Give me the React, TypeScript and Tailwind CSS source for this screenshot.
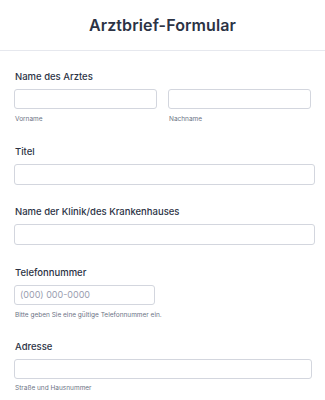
import React from "react";

const inputCls =
  "h-[20px] rounded-[3px] border border-[#d3d6de] bg-white";

export default function App() {
  return (
    <div
      className="w-[325px] h-[400px] bg-white overflow-hidden text-[#2c3345]"
      style={{ fontFamily: "Inter, 'Noto Sans', sans-serif" }}
    >
      <div className="h-[51px] border-b border-[#e6e8ee] flex items-center justify-center">
        <h1 className="text-[16px] font-semibold tracking-[0.1px] text-[#2c3345] leading-none">
          Arztbrief-Formular
        </h1>
      </div>
      <div className="pl-[14px] pr-[10px]">
        {/* Name des Arztes */}
        <div className="mt-[20px] h-[12px] text-[9.5px] leading-[12px] font-medium pl-[1px]">
          Name des Arztes
        </div>
        <div className="mt-[6px] flex gap-[11px] pr-[4px]">
          <div className="flex-1 flex flex-col">
            <div className={inputCls} />
            <div className="mt-[5px] h-[10px] text-[6.5px] leading-[10px] text-[#6c7385] pl-[1px]">
              Vorname
            </div>
          </div>
          <div className="flex-1 flex flex-col">
            <div className={inputCls} />
            <div className="mt-[5px] h-[10px] text-[6.5px] leading-[10px] text-[#6c7385] pl-[1px]">
              Nachname
            </div>
          </div>
        </div>

        {/* Titel */}
        <div className="mt-[22px] h-[12px] text-[9.5px] leading-[12px] font-medium pl-[1px]">
          Titel
        </div>
        <div className={"mt-[6px] " + inputCls + " h-[21px]"} />

        {/* Klinik */}
        <div className="mt-[21px] h-[12px] text-[9.5px] leading-[12px] font-medium pl-[1px]">
          Name der Klinik/des Krankenhauses
        </div>
        <div className={"mt-[6px] " + inputCls + " h-[21px]"} />

        {/* Telefon */}
        <div className="mt-[22px] h-[12px] text-[9.5px] leading-[12px] font-medium pl-[1px]">
          Telefonnummer
        </div>
        <div
          className={
            "mt-[6px] w-[141px] flex items-center px-[5px] " + inputCls
          }
        >
          <span className="text-[9px] text-[#9a9eb0]">(000) 000-0000</span>
        </div>
        <div className="mt-[5px] h-[10px] text-[6.5px] leading-[10px] text-[#6c7385] pl-[1px]">
          Bitte geben Sie eine gültige Telefonnummer ein.
        </div>

        {/* Adresse */}
        <div className="mt-[21px] h-[12px] text-[9.5px] leading-[12px] font-medium pl-[1px]">
          Adresse
        </div>
        <div className={"mt-[6px] mr-[3px] " + inputCls} />
        <div className="mt-[4px] h-[10px] text-[6.5px] leading-[10px] text-[#6c7385] pl-[1px]">
          Straße und Hausnummer
        </div>
      </div>
    </div>
  );
}
